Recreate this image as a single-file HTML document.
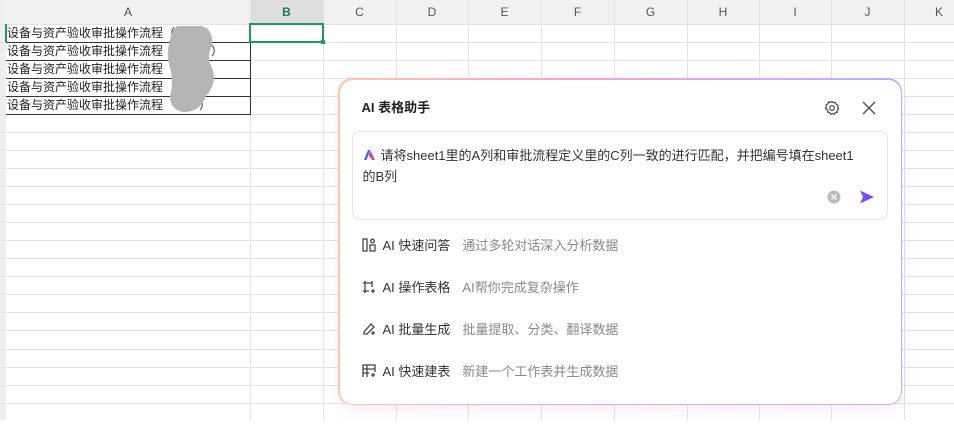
<!DOCTYPE html>
<html><head><meta charset="utf-8"><style>
body{margin:0;width:954px;height:441px;background:#fff;position:relative;overflow:hidden;font-family:"Liberation Sans","Noto Sans CJK SC",sans-serif}
.col{position:absolute;top:0;height:24px;line-height:24px;text-align:center;font-size:12px;color:#555}
.cell{position:absolute;left:7px;font-size:12px;color:#222;height:18px;line-height:18px;white-space:nowrap}
.panel{position:absolute;left:338px;top:78px;width:564px;height:327px;border-radius:14px;background:linear-gradient(90deg,#ffc9a8,#ff9fd0 40%,#d6a8ff 80%,#a9b6ff);padding:1.5px;box-sizing:border-box;box-shadow:0 4px 14px rgba(230,120,200,.15)}
.in{width:100%;height:100%;background:#fff;border-radius:13px;position:relative}
.t{position:absolute;left:22px;top:17px;font-size:13px;font-weight:bold;color:#222}
.box{position:absolute;left:12px;top:51px;width:536px;height:89px;border:1px solid #e4e4e4;border-radius:8px;box-sizing:border-box}
.q{position:absolute;left:10px;top:13px;width:522px;font-size:13px;line-height:21px;color:#333;white-space:nowrap}
.it{position:absolute;left:22px;font-size:13px;color:#333;height:20px;line-height:20px}
.it b{font-weight:normal;margin-left:7px}
.it i{font-style:normal;color:#888;margin-left:12px}
</style></head><body>
<svg width="954" height="441" style="position:absolute;left:0;top:0">
<rect x="0" y="0" width="954" height="24" fill="#f1f1f1"/>
<rect x="0" y="0" width="6" height="420" fill="#eee"/>
<rect x="250" y="0" width="73" height="24" fill="#dedede"/>
<g stroke="#e3e3e3" stroke-width="1">
<line x1="250.5" y1="0" x2="250.5" y2="420"/><line x1="323.5" y1="0" x2="323.5" y2="420"/><line x1="396.5" y1="0" x2="396.5" y2="420"/><line x1="468.5" y1="0" x2="468.5" y2="420"/><line x1="541.5" y1="0" x2="541.5" y2="420"/><line x1="614.5" y1="0" x2="614.5" y2="420"/><line x1="687.5" y1="0" x2="687.5" y2="420"/><line x1="759.5" y1="0" x2="759.5" y2="420"/><line x1="831.5" y1="0" x2="831.5" y2="420"/><line x1="904.5" y1="0" x2="904.5" y2="420"/>
<line x1="0" y1="24.5" x2="954" y2="24.5"/><line x1="0" y1="42.5" x2="954" y2="42.5"/><line x1="0" y1="60.5" x2="954" y2="60.5"/><line x1="0" y1="78.5" x2="954" y2="78.5"/><line x1="0" y1="96.5" x2="954" y2="96.5"/><line x1="0" y1="114.5" x2="954" y2="114.5"/><line x1="0" y1="132.5" x2="954" y2="132.5"/><line x1="0" y1="150.5" x2="954" y2="150.5"/><line x1="0" y1="168.5" x2="954" y2="168.5"/><line x1="0" y1="186.5" x2="954" y2="186.5"/><line x1="0" y1="204.5" x2="954" y2="204.5"/><line x1="0" y1="222.5" x2="954" y2="222.5"/><line x1="0" y1="240.5" x2="954" y2="240.5"/><line x1="0" y1="258.5" x2="954" y2="258.5"/><line x1="0" y1="276.5" x2="954" y2="276.5"/><line x1="0" y1="294.5" x2="954" y2="294.5"/><line x1="0" y1="312.5" x2="954" y2="312.5"/><line x1="0" y1="330.5" x2="954" y2="330.5"/><line x1="0" y1="349.5" x2="954" y2="349.5"/><line x1="0" y1="367.5" x2="954" y2="367.5"/><line x1="0" y1="385.5" x2="954" y2="385.5"/><line x1="0" y1="403.5" x2="954" y2="403.5"/>
</g>
<g stroke="#333" stroke-width="1"><line x1="6" y1="42.5" x2="250" y2="42.5"/><line x1="6" y1="60.5" x2="250" y2="60.5"/><line x1="6" y1="78.5" x2="250" y2="78.5"/><line x1="6" y1="96.5" x2="250" y2="96.5"/><line x1="6" y1="114.5" x2="250" y2="114.5"/><line x1="250.5" y1="42" x2="250.5" y2="115"/></g>
<rect x="5" y="24" width="2" height="18" fill="#1f9a5e"/>
<rect x="250" y="24" width="73" height="18" fill="none" stroke="#1f9a5e" stroke-width="2"/>
<rect x="321" y="40" width="4" height="4" fill="#1f9a5e"/>
</svg>
<div class="col" style="left:6px;width:244px">A</div>
<div class="col" style="left:250px;width:73px;color:#1f7a4d;font-weight:bold">B</div>
<div class="col" style="left:323px;width:73px">C</div><div class="col" style="left:396px;width:72px">D</div><div class="col" style="left:468px;width:73px">E</div><div class="col" style="left:541px;width:73px">F</div><div class="col" style="left:614px;width:73px">G</div><div class="col" style="left:687px;width:72px">H</div><div class="col" style="left:759px;width:72px">I</div><div class="col" style="left:831px;width:73px">J</div><div class="col" style="left:904px;width:70px">K</div>
<div class="cell" style="top:24px">设备与资产验收审批操作流程（</div>
<div class="cell" style="top:42px">设备与资产验收审批操作流程（　　　）</div>
<div class="cell" style="top:60px">设备与资产验收审批操作流程（</div>
<div class="cell" style="top:78px">设备与资产验收审批操作流程</div>
<div class="cell" style="top:96px">设备与资产验收审批操作流程　　　）</div>
<svg width="954" height="441" style="position:absolute;left:0;top:0"><path d="M178 26h24q12 4 10 20q-6 10 0 22q6 14-6 28q-6 16-22 16q-14-2-14-16q4-14 0-28q-4-14 0-28q2-12 8-14z" fill="#b5b5b5"/></svg>
<div class="panel"><div class="in">
<div class="t">AI 表格助手</div>
<svg style="position:absolute;left:484px;top:20px" width="16" height="16" viewBox="0 0 16 16" fill="none" stroke="#555" stroke-width="1.3"><circle cx="8" cy="8" r="2.3"/><path d="M8 1.5l1.5 1.3 2-.4.6 1.9 1.9.9-.4 2 1 1.6-1.4 1.4.1 2-2 .4-1 1.7-1.8-.8-1.8.8-1-1.7-2-.4.1-2L1.5 8.3l1-1.6-.4-2 1.9-.9.6-1.9 2 .4z"/></svg>
<svg style="position:absolute;left:522px;top:21px" width="14" height="14" viewBox="0 0 14 14" stroke="#555" stroke-width="1.5"><path d="M1 1L13 13M13 1L1 13"/></svg>
<div class="box"><div class="q"><svg width="13" height="12" viewBox="0 0 13 12" style="vertical-align:-1px;margin-right:5px"><path d="M1 11L5 1h2L3.5 11z" fill="#3a5cff"/><path d="M5.5 6l2-4.5L12 11H9z" fill="#e0409a"/></svg>请将sheet1里的A列和审批流程定义里的C列一致的进行匹配，并把编号填在sheet1<br>的B列</div>
<svg style="position:absolute;left:474px;top:58px" width="14" height="14"><circle cx="7" cy="7" r="6.5" fill="#bbb"/><path d="M4.5 4.5l5 5M9.5 4.5l-5 5" stroke="#fff" stroke-width="1.4"/></svg>
<svg style="position:absolute;left:506px;top:57px" width="16" height="16" viewBox="0 0 16 16"><path d="M1 1.5L15 8 1 14.5l3-6.5z" fill="#7b4dff"/></svg>
</div>
<div class="it" style="top:156px"><svg width="14" height="14" viewBox="0 0 14 14" fill="none" stroke="#444" stroke-width="1.3" style="vertical-align:-2px"><rect x="1" y="1" width="4" height="12"/><circle cx="10.5" cy="3" r="1.8"/><rect x="8" y="7" width="5" height="6"/></svg><b>AI 快速问答</b><i>通过多轮对话深入分析数据</i></div>
<div class="it" style="top:198px"><svg width="14" height="14" viewBox="0 0 14 14" fill="none" stroke="#444" stroke-width="1.3" style="vertical-align:-2px"><path d="M3 1v12M1 3h9M10 1v6M1 11h6"/><path d="M11 9v4M9 11h4"/></svg><b>AI 操作表格</b><i>AI帮你完成复杂操作</i></div>
<div class="it" style="top:240px"><svg width="14" height="14" viewBox="0 0 14 14" fill="none" stroke="#444" stroke-width="1.3" style="vertical-align:-2px"><path d="M2 10L9 2l3 3-7 7H2z"/><path d="M11 9v4M9 11h4"/></svg><b>AI 批量生成</b><i>批量提取、分类、翻译数据</i></div>
<div class="it" style="top:282px"><svg width="14" height="14" viewBox="0 0 14 14" fill="none" stroke="#444" stroke-width="1.3" style="vertical-align:-2px"><path d="M1 13V1h12v7M1 5h12M1 9h6M5 1v12"/><path d="M11 9v4M9 11h4"/></svg><b>AI 快速建表</b><i>新建一个工作表并生成数据</i></div>
</div></div>
</body></html>
